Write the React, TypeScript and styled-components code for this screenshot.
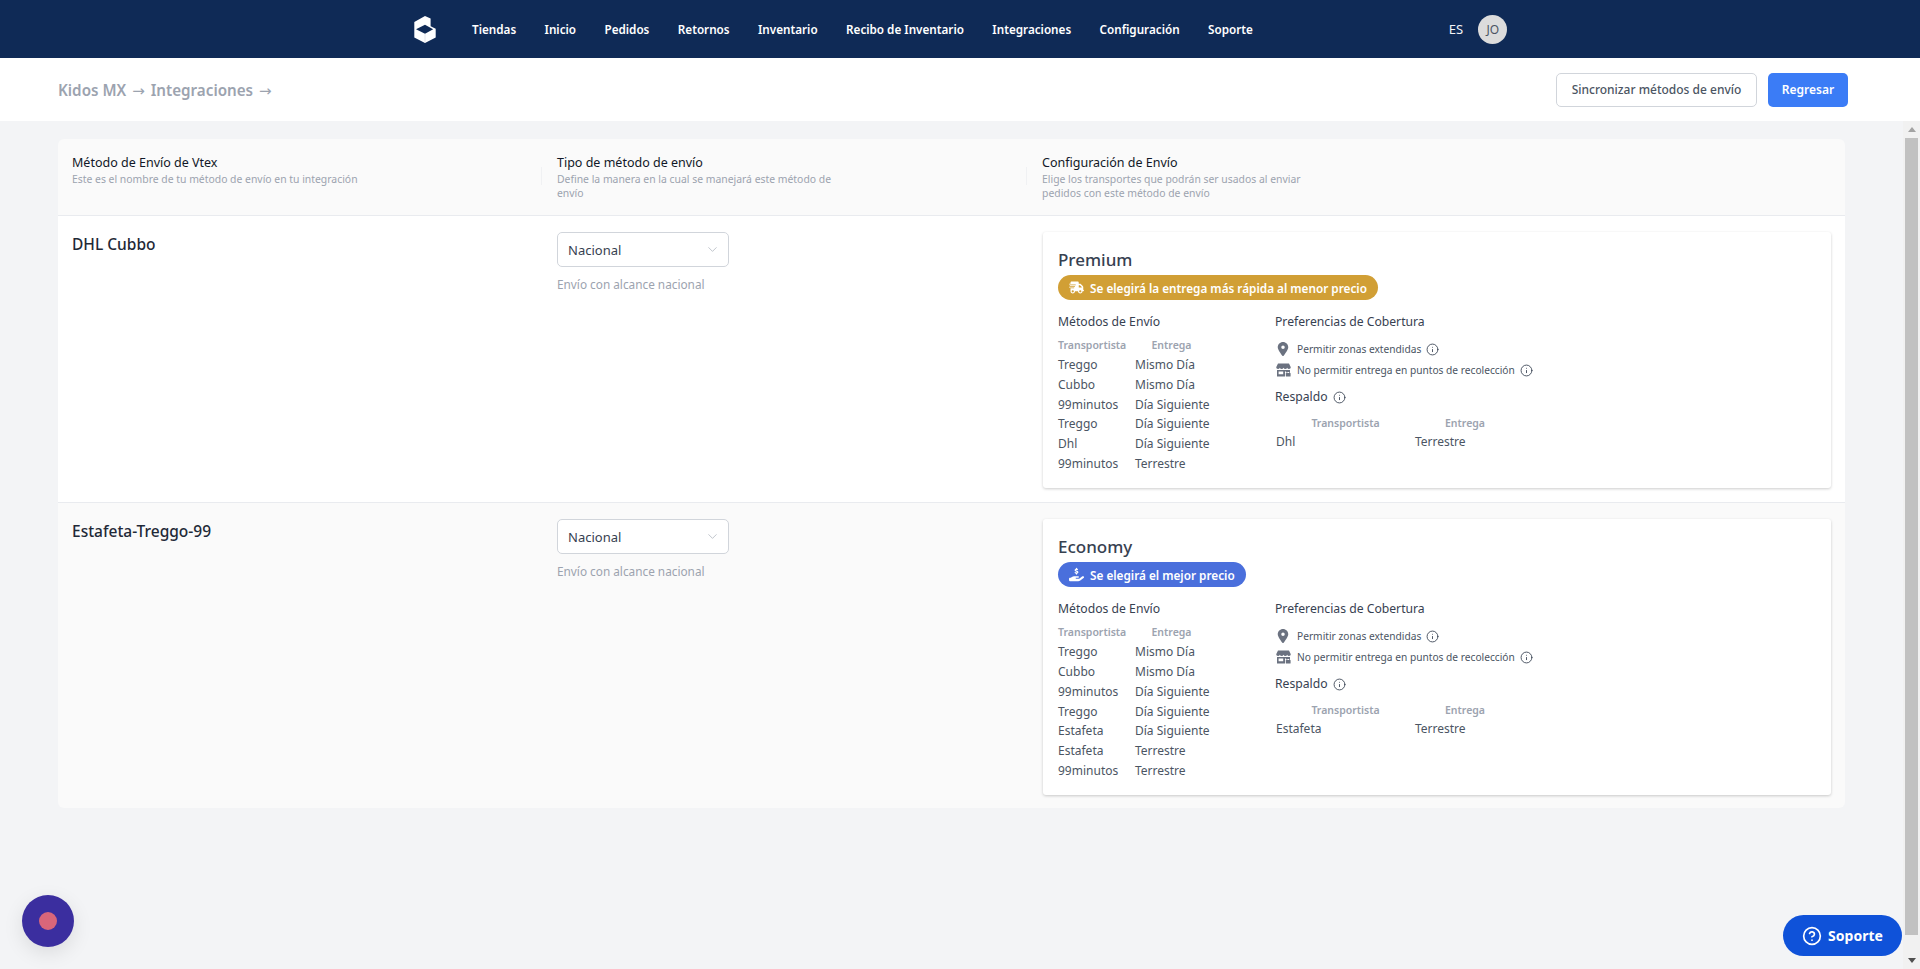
import React from "react";
import styled, { createGlobalStyle } from "styled-components";
import { Info, ChevronDown, CircleHelp } from "lucide-react";
import { FaTruckFast, FaHandHoldingDollar, FaLocationDot } from "react-icons/fa6";

const navLinks = ["Tiendas", "Inicio", "Pedidos", "Retornos", "Inventario", "Recibo de Inventario", "Integraciones", "Configuración", "Soporte"];

interface Carrier {
    name: string;
    delivery: string;
}

interface ShippingMethod {
    name: string;
    plan: string;
    badge: string;
    tone: "gold" | "blue";
    carriers: Carrier[];
    backup: Carrier;
}

const methods: ShippingMethod[] = [
    {
        name: "DHL Cubbo",
        plan: "Premium",
        badge: "Se elegirá la entrega más rápida al menor precio",
        tone: "gold",
        carriers: [
            { name: "Treggo", delivery: "Mismo Día" },
            { name: "Cubbo", delivery: "Mismo Día" },
            { name: "99minutos", delivery: "Día Siguiente" },
            { name: "Treggo", delivery: "Día Siguiente" },
            { name: "Dhl", delivery: "Día Siguiente" },
            { name: "99minutos", delivery: "Terrestre" },
        ],
        backup: { name: "Dhl", delivery: "Terrestre" },
    },
    {
        name: "Estafeta-Treggo-99",
        plan: "Economy",
        badge: "Se elegirá el mejor precio",
        tone: "blue",
        carriers: [
            { name: "Treggo", delivery: "Mismo Día" },
            { name: "Cubbo", delivery: "Mismo Día" },
            { name: "99minutos", delivery: "Día Siguiente" },
            { name: "Treggo", delivery: "Día Siguiente" },
            { name: "Estafeta", delivery: "Día Siguiente" },
            { name: "Estafeta", delivery: "Terrestre" },
            { name: "99minutos", delivery: "Terrestre" },
        ],
        backup: { name: "Estafeta", delivery: "Terrestre" },
    },
];

const Logo = () => (
    <svg width="22" height="27" viewBox="0 0 21 26.5">
        <path d="M10.5 0 L16 2.5 V10 L21 12.5 V21 L10.5 26.5 L0 21 V6 Z" fill="#fff" />
        <path d="M1.7 13 L10.5 8.5 L18.5 13 L10.5 17.5 Z" fill="#0f2a56" />
        <path d="M10.5 17.5 V26.5" stroke="#c9cfda" strokeWidth="0.5" />
    </svg>
);

const StoreIcon = () => (
    <svg width="15" height="14" viewBox="0 0 15 14" fill="#6b7280">
        <path d="M2 0.5 H13 L14.8 4.2 Q14.8 6 13 6 Q11.6 6 11.2 4.8 Q10.6 6 9.3 6 Q8 6 7.5 4.8 Q7 6 5.7 6 Q4.4 6 3.8 4.8 Q3.4 6 2 6 Q0.2 6 0.2 4.2 Z" />
        <path d="M1 7 H14 V9 H10 V8.6 Q10 7.8 9.4 8.4 L9 9 V13.5 H1 Z M2.6 8.6 V11.2 H7.2 V8.6 Z" />
        <rect x="9.8" y="10" width="4.8" height="3.6" rx="0.6" />
        <path d="M10.9 10 V9.2 A1.3 1.3 0 0 1 13.5 9.2 V10" fill="none" stroke="#6b7280" strokeWidth="0.9" />
    </svg>
);

function CarrierTable({ carriers }: { carriers: Carrier[] }) {
    return (
        <CarrierGrid>
            <CarrierHead>Transportista</CarrierHead>
            <DeliveryHead>Entrega</DeliveryHead>
            {carriers.map((carrier, i) => (
                <React.Fragment key={i}>
                    <CarrierCell>{carrier.name}</CarrierCell>
                    <CarrierCell>{carrier.delivery}</CarrierCell>
                </React.Fragment>
            ))}
        </CarrierGrid>
    );
}

function MethodRow({ method, striped }: { method: ShippingMethod; striped: boolean }) {
    return (
        <Row $striped={striped}>
            <NameCell>{method.name}</NameCell>
            <TypeCell>
                <SelectBox>
                    Nacional
                    <ChevronDown size={15} strokeWidth={1} color="#9ca3af" />
                </SelectBox>
                <Helper>Envío con alcance nacional</Helper>
            </TypeCell>
            <ConfigCell>
                <PlanCard>
                    <PlanTitle>{method.plan}</PlanTitle>
                    <Badge $tone={method.tone}>
                        {method.tone === "gold" ? <FaTruckFast size={15} /> : <FaHandHoldingDollar size={15} />}
                        {method.badge}
                    </Badge>
                    <PlanBody>
                        <MethodsColumn>
                            <SectionTitle>Métodos de Envío</SectionTitle>
                            <CarrierTable carriers={method.carriers} />
                        </MethodsColumn>
                        <div>
                            <SectionTitle>Preferencias de Cobertura</SectionTitle>
                            <Preferences>
                                <Preference>
                                    <PrefIcon><FaLocationDot size={14} color="#6b7280" /></PrefIcon>
                                    Permitir zonas extendidas
                                    <Info size={13} strokeWidth={1.6} color="#374151" />
                                </Preference>
                                <Preference>
                                    <PrefIcon><StoreIcon /></PrefIcon>
                                    No permitir entrega en puntos de recolección
                                    <Info size={13} strokeWidth={1.6} color="#374151" />
                                </Preference>
                            </Preferences>
                            <BackupTitle>
                                Respaldo
                                <Info size={13} strokeWidth={1.6} color="#374151" />
                            </BackupTitle>
                            <BackupGrid>
                                <BackupHead>Transportista</BackupHead>
                                <BackupHead>Entrega</BackupHead>
                                <CarrierCell>{method.backup.name}</CarrierCell>
                                <CarrierCell>{method.backup.delivery}</CarrierCell>
                            </BackupGrid>
                        </div>
                    </PlanBody>
                </PlanCard>
            </ConfigCell>
        </Row>
    );
}

export default function App() {
    return (
        <Page>
            <GlobalStyle />
            <Navbar>
                <Logo />
                <NavLinks>
                    {navLinks.map(link => <NavLink key={link}>{link}</NavLink>)}
                </NavLinks>
                <NavUser>
                    <Lang>ES</Lang>
                    <Avatar>JO</Avatar>
                </NavUser>
            </Navbar>
            <SubHeader>
                <Breadcrumb>Kidos MX <Arrow>→</Arrow> Integraciones <Arrow>→</Arrow></Breadcrumb>
                <Actions>
                    <OutlineButton>Sincronizar métodos de envío</OutlineButton>
                    <PrimaryButton>Regresar</PrimaryButton>
                </Actions>
            </SubHeader>
            <ContentRow>
                <Main>
                    <TableCard>
                        <TableHeader>
                            <HeaderCell>
                                <HeaderTitle>Método de Envío de Vtex</HeaderTitle>
                                <HeaderHint>Este es el nombre de tu método de envío en tu integración</HeaderHint>
                            </HeaderCell>
                            <HeaderCell $divider>
                                <HeaderTitle>Tipo de método de envío</HeaderTitle>
                                <HeaderHint>Define la manera en la cual se manejará este método de envío</HeaderHint>
                            </HeaderCell>
                            <HeaderCell $divider>
                                <HeaderTitle>Configuración de Envío</HeaderTitle>
                                <HeaderHint>Elige los transportes que podrán ser usados al enviar pedidos con este método de envío</HeaderHint>
                            </HeaderCell>
                        </TableHeader>
                        {methods.map((method, i) => <MethodRow key={method.name} method={method} striped={i % 2 === 1} />)}
                    </TableCard>
                </Main>
                <ScrollTrack>
                    <ScrollUp />
                    <ScrollThumb />
                    <ScrollDown />
                </ScrollTrack>
            </ContentRow>
            <ChatBubble><ChatDot /></ChatBubble>
            <SupportButton>
                <CircleHelp size={20} strokeWidth={2} />
                Soporte
            </SupportButton>
        </Page>
    );
}

const GlobalStyle = createGlobalStyle`
    html, body {
        margin: 0;
        height: 100%;
        overflow: hidden;
    }
    body {
        font-family: "Noto Sans", "Liberation Sans", sans-serif;
    }
    * {
        box-sizing: border-box;
    }
`;

const Page = styled.div`
    display: flex;
    flex-direction: column;
    height: 100vh;
    background: #f3f4f6;
`;

const Navbar = styled.nav`
    flex: none;
    display: flex;
    align-items: center;
    height: 58px;
    padding-left: 414px;
    background: #0f2a56;
    color: #fff;
`;

const NavLinks = styled.div`
    display: flex;
    gap: 28.4px;
    margin-left: 36px;
`;

const NavLink = styled.a`
    font-size: 11.7px;
    font-weight: 600;
    color: #fff;
`;

const NavUser = styled.div`
    display: flex;
    align-items: center;
    gap: 15px;
    margin-left: 196px;
`;

const Lang = styled.span`
    font-size: 13px;
    color: #f3f4f6;
`;

const Avatar = styled.div`
    display: flex;
    align-items: center;
    justify-content: center;
    width: 29px;
    height: 29px;
    border-radius: 50%;
    background: #dcdcdc;
    color: #4b5563;
    font-size: 12px;
`;

const SubHeader = styled.header`
    flex: none;
    display: flex;
    align-items: center;
    justify-content: space-between;
    height: 63px;
    padding: 0 72px 0 58px;
    background: #fff;
`;

const Breadcrumb = styled.div`
    font-size: 15.2px;
    font-weight: 600;
    color: #9ca3af;
`;

const Arrow = styled.span`
    margin: 0 2px;
    font-family: "DejaVu Sans", sans-serif;
    font-size: 15px;
    font-weight: 400;
`;

const Actions = styled.div`
    display: flex;
    gap: 11px;
`;

const OutlineButton = styled.button`
    width: 201px;
    height: 34px;
    padding: 0;
    border: 1px solid #d1d5db;
    border-radius: 5px;
    background: #fff;
    color: #4b5563;
    font: 500 12px "Noto Sans", sans-serif;
`;

const PrimaryButton = styled.button`
    width: 80px;
    height: 34px;
    padding: 0;
    border: none;
    border-radius: 5px;
    background: #3b7cf6;
    color: #fff;
    font: 600 12px "Noto Sans", sans-serif;
`;

const ContentRow = styled.div`
    flex: 1;
    min-height: 0;
    display: flex;
`;

const Main = styled.main`
    flex: 1;
    min-width: 0;
    overflow: hidden;
    padding: 18px 58px 0;
`;

const ScrollTrack = styled.div`
    flex: none;
    display: flex;
    flex-direction: column;
    width: 17px;
    background: #f1f1f1;
`;

const ScrollUp = styled.div`
    flex: none;
    height: 17px;
    display: flex;
    align-items: center;
    justify-content: center;

    &::before {
        content: "";
        border-left: 4.5px solid transparent;
        border-right: 4.5px solid transparent;
        border-bottom: 5px solid #a3a3a3;
    }
`;

const ScrollThumb = styled.div`
    flex: 1;
    margin: 0 2px 17px;
    background: #c1c1c1;
`;

const ScrollDown = styled.div`
    flex: none;
    height: 17px;
    display: flex;
    align-items: center;
    justify-content: center;

    &::before {
        content: "";
        border-left: 4.5px solid transparent;
        border-right: 4.5px solid transparent;
        border-top: 5px solid #505050;
    }
`;

const TableCard = styled.section`
    width: 1787px;
    border-radius: 6px;
    overflow: hidden;
`;

const TableHeader = styled.div`
    display: grid;
    grid-template-columns: 485px 485px 1fr;
    height: 77px;
    padding-top: 16px;
    background: #fafafa;
    border-bottom: 1px solid #e9ebef;
`;

const HeaderCell = styled.div<{ $divider?: boolean }>`
    position: relative;
    padding-left: 14px;

    &::before {
        content: "";
        display: ${props => props.$divider ? "block" : "none"};
        position: absolute;
        left: -2px;
        top: 12px;
        width: 1px;
        height: 18px;
        background: #f0f1f3;
    }
`;

const HeaderTitle = styled.div`
    font-size: 12.5px;
    line-height: 16px;
    font-weight: 400;
    color: #111827;
`;

const HeaderHint = styled.div`
    max-width: 290px;
    margin-top: 1px;
    font-size: 10.4px;
    line-height: 14px;
    color: #9ca3af;
`;

const Row = styled.div<{ $striped: boolean }>`
    display: grid;
    grid-template-columns: 485px 486px 1fr;
    padding: 16px 0 ${props => props.$striped ? "12px" : "14px"};
    background: ${props => props.$striped ? "#fafafa" : "#fff"};
    border-bottom: 1px solid ${props => props.$striped ? "transparent" : "#e9ebef"};
`;

const NameCell = styled.div`
    padding-left: 14px;
    font-size: 15.5px;
    line-height: 24px;
    font-weight: 500;
    color: #1f2937;
`;

const TypeCell = styled.div`
    padding-left: 14px;
`;

const SelectBox = styled.div`
    display: flex;
    align-items: center;
    justify-content: space-between;
    width: 172px;
    height: 35px;
    padding: 0 8px 0 10px;
    border: 1px solid #d1d5db;
    border-radius: 5px;
    background: #fff;
    font-size: 13px;
    color: #374151;
`;

const Helper = styled.div`
    margin-top: 9px;
    font-size: 11.8px;
    line-height: 16px;
    color: #9ca3af;
`;

const ConfigCell = styled.div`
    padding: 0 14px;
`;

const PlanCard = styled.div`
    padding: 16px 15px 15px;
    border-radius: 3px;
    background: #fff;
    box-shadow: 0 1px 3px rgba(0, 0, 0, 0.2);
`;

const PlanTitle = styled.div`
    font-size: 17px;
    line-height: 23px;
    font-weight: 500;
    color: #374151;
`;

const Badge = styled.div<{ $tone: "gold" | "blue" }>`
    display: inline-flex;
    align-items: center;
    gap: 6px;
    height: 25px;
    margin-top: 4px;
    padding: 0 11px;
    border-radius: 13px;
    background: ${props => props.$tone === "gold" ? "#d19f35" : "#4a6fdc"};
    color: #fff;
    font-size: 11.75px;
    font-weight: 600;
`;

const PlanBody = styled.div`
    display: flex;
    margin-top: 13px;
`;

const MethodsColumn = styled.div`
    width: 217px;
`;

const SectionTitle = styled.div`
    font-size: 12.2px;
    line-height: 18px;
    font-weight: 400;
    color: #374151;
`;

const CarrierGrid = styled.div`
    display: grid;
    grid-template-columns: 77px 73px;
    grid-auto-rows: 19.75px;
    margin-top: 4px;
    align-items: center;
`;

const CarrierHead = styled.div`
    font-size: 10.5px;
    font-weight: 600;
    color: #9ca3af;
    white-space: nowrap;
`;

const DeliveryHead = styled(CarrierHead)`
    text-align: center;
`;

const CarrierCell = styled.div`
    font-size: 12px;
    color: #4b5563;
    white-space: nowrap;
`;

const Preferences = styled.div`
    display: flex;
    flex-direction: column;
    gap: 3px;
    margin-top: 9px;
`;

const Preference = styled.div`
    display: flex;
    align-items: center;
    height: 18px;
    gap: 5px;
    font-size: 10.2px;
    color: #4b5563;
`;

const PrefIcon = styled.span`
    display: flex;
    justify-content: center;
    width: 16px;
    margin-right: 1px;
`;

const BackupTitle = styled(SectionTitle)`
    display: flex;
    align-items: center;
    gap: 5px;
    margin-top: 9px;
`;

const BackupGrid = styled.div`
    display: grid;
    grid-template-columns: 139px 100px;
    grid-auto-rows: 19px;
    align-items: center;
    margin-top: 7px;
    margin-left: 1px;
`;

const BackupHead = styled(CarrierHead)`
    text-align: center;
`;

const ChatBubble = styled.div`
    position: fixed;
    left: 22px;
    bottom: 22px;
    display: flex;
    align-items: center;
    justify-content: center;
    width: 52px;
    height: 52px;
    border-radius: 50%;
    background: #3b2e9f;
    box-shadow: 0 6px 20px rgba(0, 0, 0, 0.1);
`;

const ChatDot = styled.div`
    width: 18px;
    height: 18px;
    border-radius: 50%;
    background: #d9667a;
`;

const SupportButton = styled.button`
    position: fixed;
    right: 18px;
    bottom: 13px;
    display: flex;
    align-items: center;
    justify-content: center;
    gap: 6px;
    width: 119px;
    height: 41px;
    padding: 0;
    border: none;
    border-radius: 21px;
    background: #0f52d9;
    color: #fff;
    font: 700 14px "Noto Sans", sans-serif;
`;
